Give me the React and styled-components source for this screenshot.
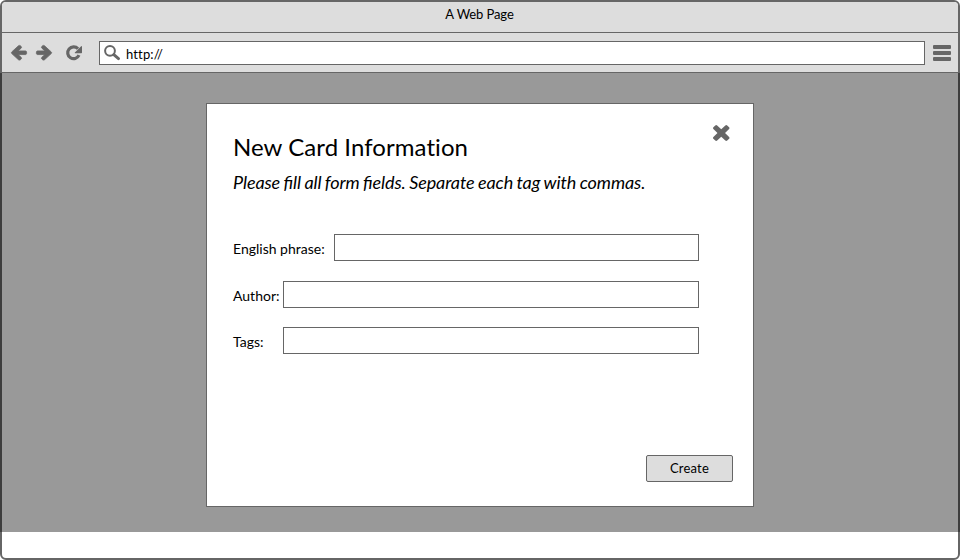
import React from "react";
import styled, { createGlobalStyle } from "styled-components";

const GlobalStyle = createGlobalStyle`
  *, *::before, *::after { box-sizing: border-box; }
  body { margin: 0; background: #fff; }
  button, input { font: inherit; color: inherit; }
`;

const BrowserFrame = styled.div`
  width: 960px;
  height: 560px;
  display: flex;
  flex-direction: column;
  border: 2px solid #666;
  border-radius: 6px;
  background: #fff;
  color: #000;
  font-family: Lato, sans-serif;
  font-size: 13px;
`;

const TitleBar = styled.header`
  flex: none;
  height: 31px;
  padding: 4px 1px 0 0;
  border-bottom: 1px solid #666;
  border-radius: 4px 4px 0 0;
  background: #ddd;
  line-height: 17px;
  letter-spacing: -0.1px;
  text-align: center;
`;

const Toolbar = styled.nav`
  flex: none;
  display: flex;
  align-items: flex-start;
  height: 40px;
  padding: 8px 7px 0 9px;
  border-bottom: 1px solid #666;
  background: #ddd;
`;

const IconButton = styled.button`
  flex: none;
  display: block;
  height: 16px;
  margin: ${({ $margin }) => $margin || 0};
  padding: 0;
  border: 0;
  background: none;
`;

const Glyph = styled.svg`
  display: block;
  flex: none;
  overflow: visible;
  fill: #666;
`;

const AddressBar = styled.div`
  flex: 1;
  display: flex;
  height: 24px;
  padding: 3px 4px;
  gap: 6px;
  border: 1px solid #666;
  background: #fff;
`;

const Url = styled.span`
  font-variant-ligatures: none;
  letter-spacing: 0.15px;
  line-height: 18px;
`;

const Viewport = styled.main`
  flex: none;
  height: 459px;
  margin: 0 -2px;
  padding-top: 30px;
  border: solid #3d3d3d;
  border-width: 0 2px;
  background: #999;
`;

const Dialog = styled.section`
  display: flex;
  flex-direction: column;
  width: 548px;
  height: 404px;
  margin: 0 auto;
  padding: 20px 20px 24px 26px;
  border: 1px solid #666;
  background: #fff;
`;

const DialogHeader = styled.div`
  display: flex;
  justify-content: space-between;
  height: 110px;
`;

const Title = styled.h1`
  margin: 8px 0 0;
  font-size: 24px;
  font-weight: 400;
  letter-spacing: 0.06px;
  line-height: 30px;
  font-variant-ligatures: none;
`;

const Hint = styled.p`
  margin: 8px 0 0;
  font-size: 18px;
  font-style: italic;
  line-height: 24px;
  letter-spacing: -0.09px;
  word-spacing: -0.7px;
  font-feature-settings: "liga" 1;
`;

const Fields = styled.form`
  display: grid;
  grid-auto-rows: 27px;
  row-gap: 20px;
  width: 466px;
`;

const Field = styled.label`
  display: flex;
  height: 27px;
  margin-top: ${({ $lift }) => ($lift ? "-1px" : 0)};
  font-size: 14px;
  line-height: 30px;
`;

const FieldName = styled.span`
  flex: none;
  width: ${({ $wide }) => ($wide ? 101 : 50)}px;
  white-space: nowrap;
`;

const TextInput = styled.input`
  flex: 1;
  min-width: 0;
  height: 27px;
  padding: 0 6px;
  border: 1px solid #666;
  border-radius: 0;
  background: #fff;
  outline: none;
`;

const CreateButton = styled.button`
  align-self: flex-end;
  width: 87px;
  height: 27px;
  margin-top: auto;
  padding: 0;
  border: 1px solid #666;
  border-radius: 2px;
  background: #ddd;
  letter-spacing: 0.2px;
  line-height: 25px;
`;

const ICONS = {
  back: {
    box: "152 141 1552 1638",
    stroke: 80,
    d: "M1664 896v128q0 53-32.5 90.5t-84.5 37.5h-704l293 294q38 36 38 90t-38 90l-75 76q-37 37-90 37-52 0-91-37l-651-652q-37-37-37-90 0-52 37-91l651-650q38-38 91-38 52 0 90 38l75 74q38 38 38 91t-38 91l-293 293h704q52 0 84.5 37.5t32.5 90.5z",
  },
  forward: {
    box: "88 141 1552 1638",
    stroke: 80,
    d: "M1600 960q0 54-37 91l-651 651q-39 37-91 37-51 0-90-37l-75-75q-38-38-38-91t38-91l293-293h-704q-52 0-84.5-37.5t-32.5-90.5v-128q0-53 32.5-90.5t84.5-37.5h704l-293-294q-38-36-38-90t38-90l75-75q38-38 90-38 53 0 91 38l651 651q37 35 37 90z",
  },
  close: {
    box: "302 366 1188 1188",
    d: "M1490 1322q0 40-28 68l-136 136q-28 28-68 28t-68-28l-294-294-294 294q-28 28-68 28t-68-28l-136-136q-28-28-28-68t28-68l294-294-294-294q-28-28-28-68t28-68l136-136q28-28 68-28t68 28l294 294 294-294q28-28 68-28t68 28l136 136q28 28 28 68t-28 68l-294 294 294 294q28 28 28 68z",
  },
  menu: {
    box: "0 0 18 16",
    d: "M1 0h16q1 0 1 1v2q0 1-1 1h-16q-1 0-1-1v-2q0-1 1-1zM1 6h16q1 0 1 1v2q0 1-1 1h-16q-1 0-1-1v-2q0-1 1-1zM1 12h16q1 0 1 1v2q0 1-1 1h-16q-1 0-1-1v-2q0-1 1-1z",
  },
};

function Icon({ name, width = 16, height = 16 }) {
  const icon = ICONS[name];
  return (
    <Glyph width={width} height={height} viewBox={icon.box} preserveAspectRatio="none" aria-hidden="true">
      <path d={icon.d} stroke={icon.stroke ? "#666" : "none"} strokeWidth={icon.stroke} />
    </Glyph>
  );
}

function ReloadIcon() {
  return (
    <Glyph width="16" height="16" viewBox="0 0 16 16" aria-hidden="true">
      <path d="M12 3.8A5.9 5.9 0 1 0 13 10.2" fill="none" stroke="#666" strokeWidth="3.2" />
      <path d="M15.4 1.1Q16 .9 16 1.5V7.5Q16 8.2 15.3 8.2H9.2Q8.4 8 8.9 7.4Z" />
    </Glyph>
  );
}

function SearchIcon() {
  return (
    <Glyph width="16" height="16" viewBox="0 0 16 16" aria-hidden="true">
      <circle cx="6" cy="5.8" r="4.9" fill="none" stroke="#666" strokeWidth="2" />
      <path d="M9.8 9.6L14.5 13.6" fill="none" stroke="#666" strokeWidth="3" strokeLinecap="round" />
    </Glyph>
  );
}

export default function App() {
  return (
    <>
      <GlobalStyle />
      <BrowserFrame>
        <TitleBar>A Web Page</TitleBar>
        <Toolbar>
          <IconButton aria-label="Back" $margin="4px 9px 0 0"><Icon name="back" height={15.5} /></IconButton>
          <IconButton aria-label="Forward" $margin="4px 14px 0 0"><Icon name="forward" height={15.5} /></IconButton>
          <IconButton aria-label="Reload" $margin="4px 17px 0 0"><ReloadIcon /></IconButton>
          <AddressBar><SearchIcon /><Url>http://</Url></AddressBar>
          <IconButton aria-label="Menu" $margin="4px 0 0 8px"><Icon name="menu" width={18} /></IconButton>
        </Toolbar>
        <Viewport>
          <Dialog role="dialog">
            <DialogHeader>
              <div>
                <Title>New Card Information</Title>
                <Hint>Please fill all form fields. Separate each tag with commas.</Hint>
              </div>
              <IconButton aria-label="Close" $margin="1px 4px 0 0"><Icon name="close" width={16.5} /></IconButton>
            </DialogHeader>
            <Fields>
              <Field><FieldName $wide>English phrase:</FieldName><TextInput /></Field>
              <Field><FieldName>Author:</FieldName><TextInput /></Field>
              <Field $lift><FieldName>Tags:</FieldName><TextInput /></Field>
            </Fields>
            <CreateButton>Create</CreateButton>
          </Dialog>
        </Viewport>
      </BrowserFrame>
    </>
  );
}
